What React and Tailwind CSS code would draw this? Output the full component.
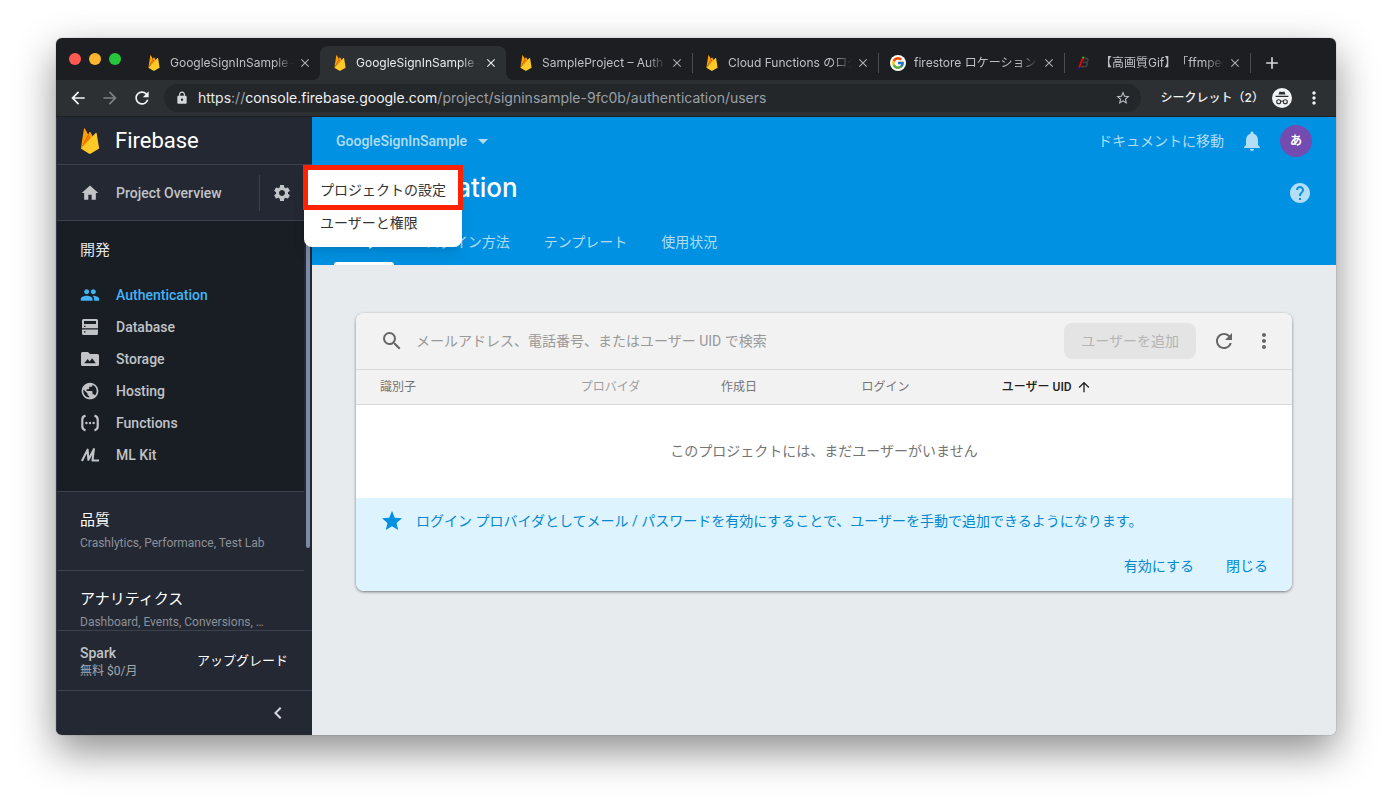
import React from "react";
import {
  MdAdd,
  MdArrowBack,
  MdArrowDropDown,
  MdArrowForward,
  MdArrowUpward,
  MdChevronLeft,
  MdClose,
  MdHelp,
  MdHome,
  MdLock,
  MdMoreVert,
  MdNotifications,
  MdPeople,
  MdPublic,
  MdRefresh,
  MdSearch,
  MdSettings,
  MdStar,
  MdStarBorder,
} from "react-icons/md";
import { FcGoogle } from "react-icons/fc";

function FirebaseLogo({ className }) {
  return (
    <svg viewBox="5 1.6 22 29" className={className} aria-hidden="true">
      <path fill="#ffa000" d="M5.8 24.6l.17-.24L13.99 9.15l.02-.16-3.54-6.64a.66.66 0 0 0-1.23.2z" />
      <path fill="#ffa000" d="M16.58 14.01l2.63-2.7-2.63-5.02a.68.68 0 0 0-1.2 0l-1.4 2.68v.23z" />
      <path fill="#f57c00" d="M5.8 24.6l.08-.08.28-.11 10.25-10.22.13-.36-2.53-4.82z" />
      <path fill="#ffca28" d="M16.53 30.22l9.67-5.64L23.43 7.56a.69.69 0 0 0-1.17-.38L5.8 24.6l9.23 5.62a1.51 1.51 0 0 0 1.5 0" />
    </svg>
  );
}

function BlogLogo({ className }) {
  return (
    <svg viewBox="0 0 16 16" className={className} aria-hidden="true">
      <path
        d="M7 3.400h3.400c2.400 0 2.200 3.600-.8 4h-2.600 2.600c2.800.3 2 4.300-1.200 4.300H4.800"
        fill="none"
        stroke="#3c4043"
        strokeWidth="1.700"
      />
      <path d="M6.800 3.200L3.200 12.300" stroke="#f00505" strokeWidth="1.800" />
      <circle cx="7.200" cy="2.400" r="1" fill="#12d812" />
      <circle cx="2.600" cy="13.300" r=".8" fill="#1414e6" />
    </svg>
  );
}

function IncognitoIcon({ className }) {
  return (
    <svg viewBox="0 0 20 20" className={className} aria-hidden="true">
      <circle cx="10" cy="10" r="10" fill="#f1f3f4" />
      <path fill="#2b2e31" d="M7.6 3.400l2.400.6 2.400-.6 1.100 3.200h-7zM3.600 7.800h12.800v1.300H3.600z" />
      <g fill="none" stroke="#2b2e31" strokeWidth="1.100">
        <circle cx="6.700" cy="13.700" r="2" />
        <circle cx="13.300" cy="13.700" r="2" />
        <path d="M8.700 13.400q1.300-.8 2.600 0" />
      </g>
    </svg>
  );
}

function DatabaseIcon({ className }) {
  return (
    <svg viewBox="0 0 18 18" className={className} fill="currentColor" aria-hidden="true">
      <path
        fillRule="evenodd"
        d="M2.500 1h13A1.500 1.500 0 0 1 17 2.500V10.300H1V2.500A1.500 1.500 0 0 1 2.500 1zM3 3v3h12V3zM3 7.700v1.300h1.500V7.700z"
      />
      <path
        fillRule="evenodd"
        d="M1 11.500h16v4a1.500 1.500 0 0 1-1.500 1.500h-13A1.500 1.500 0 0 1 1 15.500zM3 13.200v1.300h1.500v-1.300z"
      />
    </svg>
  );
}

function StorageIcon({ className }) {
  return (
    <svg viewBox="0 0 18 18" className={className} fill="currentColor" aria-hidden="true">
      <path
        fillRule="evenodd"
        d="M1.500 2H7l2 2h7.500A1.500 1.500 0 0 1 18 5.500v9a1.500 1.500 0 0 1-1.500 1.500h-15A1.500 1.500 0 0 1 0 14.500v-11A1.500 1.500 0 0 1 1.500 2zM3.200 13.200h11.600l-3.700-5-2.500 3.200-1.900-2.300z"
      />
    </svg>
  );
}

function FunctionsIcon({ className }) {
  return (
    <svg viewBox="0 0 18 18" className={className} aria-hidden="true">
      <g fill="none" stroke="currentColor" strokeWidth="2.200">
        <path d="M4.500 1.600Q1.300 2.600 1.300 5.400v7.200Q1.300 15.400 4.500 16.400" />
        <path d="M13.500 1.600q3.200 1 3.200 3.800v7.200q0 2.800-3.200 3.800" />
      </g>
      <g fill="currentColor">
        <circle cx="5.400" cy="9" r="1.200" />
        <circle cx="9" cy="9" r="1.200" />
        <circle cx="12.600" cy="9" r="1.200" />
      </g>
    </svg>
  );
}

function MlIcon({ className }) {
  return (
    <svg viewBox="0 0 18 18" className={className} aria-hidden="true">
      <path
        d="M.9 15L6.600 3.600l.8 10.200L12.900 3.200 11.500 14.500H18"
        fill="none"
        stroke="currentColor"
        strokeWidth="2.100"
        strokeLinejoin="round"
      />
    </svg>
  );
}

const browserTabs = [
  { title: "GoogleSignInSample –", icon: FirebaseLogo },
  { title: "GoogleSignInSample –", icon: FirebaseLogo, active: true },
  { title: "SampleProject – Auth", icon: FirebaseLogo },
  { title: "Cloud Functions のログ", icon: FirebaseLogo, divider: true },
  { title: "firestore ロケーション", icon: FcGoogle, round: true, divider: true },
  { title: "【高画質Gif】「ffmpeg", icon: BlogLogo, divider: true },
];

function BrowserTab({ tab }) {
  const Icon = tab.icon;
  return (
    <div
      className={
        "relative flex h-[34px] w-[186px] min-w-0 items-center pr-2 pl-3 " +
        (tab.active
          ? "rounded-t-lg bg-[#2c3033] text-[#e8eaed] before:absolute before:bottom-0 before:-left-2 before:size-2 before:bg-[radial-gradient(circle_at_0_0,#1d1e21_8px,#2c3033_8px)] after:absolute after:-right-2 after:bottom-0 after:size-2 after:bg-[radial-gradient(circle_at_100%_0,#1d1e21_8px,#2c3033_8px)]"
          : "text-[#bdc1c6]")
      }
    >
      {tab.divider && <span className="-ml-3 mr-[11px] h-5 w-px shrink-0 bg-[#4a4d51]" />}
      <span
        className={"flex size-4 shrink-0 items-center justify-center " + (tab.round ? "rounded-full bg-white" : "")}
      >
        <Icon className={tab.round ? "size-3.5" : "size-4"} />
      </span>
      <span className="ml-2 min-w-0 flex-1 overflow-hidden text-xs whitespace-nowrap [mask-image:linear-gradient(to_right,#000_84%,transparent_100%)] [text-spacing-trim:space-all]">
        {tab.title}
      </span>
      <button type="button" aria-label="タブを閉じる" className={"ml-1 shrink-0 " + (tab.active ? "text-[#e8eaed]" : "text-[#a7aaae]")}>
        <MdClose className="size-3.5" />
      </button>
    </div>
  );
}

function BrowserChrome() {
  return (
    <header className="font-['Inter','Noto_Sans_CJK_JP',sans-serif]">
      <div className="flex h-[42px] items-end bg-[#1d1e21]">
        <div className="flex h-full shrink-0 items-center gap-2 px-[13px]">
          <button type="button" aria-label="閉じる" className="size-3 rounded-full bg-[#ff5a52]" />
          <button type="button" aria-label="最小化" className="size-3 rounded-full bg-[#ffb52e]" />
          <button type="button" aria-label="最大化" className="size-3 rounded-full bg-[#26c73c]" />
        </div>
        <div className="flex min-w-0">
          {browserTabs.map((tab, i) => (
            <BrowserTab key={i} tab={tab} />
          ))}
        </div>
        <div className="flex h-[34px] shrink-0 items-center">
          <span className="h-5 w-px bg-[#4a4d51]" />
          <button type="button" aria-label="新しいタブ" className="ml-[11px] text-[#d5d7da]">
            <MdAdd className="size-5" />
          </button>
        </div>
      </div>
      <div className="flex h-[37px] items-center border-b border-[#1d1e21] bg-[#2c3033] pr-3 text-[#f1f3f4]">
        <div className="flex shrink-0 gap-3 px-3">
          <button type="button" aria-label="戻る">
            <MdArrowBack className="size-5" />
          </button>
          <button type="button" aria-label="進む" className="text-[#7d8083]">
            <MdArrowForward className="size-5" />
          </button>
          <button type="button" aria-label="再読み込み">
            <MdRefresh className="size-5" />
          </button>
        </div>
        <div className="flex h-7 min-w-0 flex-1 items-center rounded-full bg-[#23272a] px-2.5">
          <MdLock className="size-4 shrink-0 p-px text-[#d5d7da]" />
          <div className="ml-2 min-w-0 flex-1 overflow-hidden text-sm whitespace-nowrap text-[#9aa0a6]">
            <span className="text-[#e8eaed]">https</span>://
            <span className="text-[#f1f3f4]">console.firebase.google.com</span>
            /project/signinsample-9fc0b/authentication/users
          </div>
          <button type="button" aria-label="ブックマークに追加" className="text-[#bdc1c6]">
            <MdStarBorder className="size-4" />
          </button>
        </div>
        <span className="ml-5 shrink-0 text-xs font-medium">シークレット（2）</span>
        <IncognitoIcon className="ml-2 size-5 shrink-0" />
        <button type="button" aria-label="メニュー" className="ml-3 shrink-0">
          <MdMoreVert className="size-5" />
        </button>
      </div>
    </header>
  );
}

const developItems = [
  { label: "Authentication", icon: MdPeople, active: true },
  { label: "Database", icon: DatabaseIcon },
  { label: "Storage", icon: StorageIcon },
  { label: "Hosting", icon: MdPublic },
  { label: "Functions", icon: FunctionsIcon },
  { label: "ML Kit", icon: MlIcon },
];

const sections = [
  { title: "品質", detail: "Crashlytics, Performance, Test Lab" },
  { title: "アナリティクス", detail: "Dashboard, Events, Conversions, …" },
];

function SettingsMenu() {
  return (
    <div className="absolute top-0 left-[247px] z-20 w-[158px] rounded-lg bg-white py-2 text-sm text-[#333333] shadow-lg">
      <button type="button" className="block h-[33px] w-full pl-4 text-left">
        プロジェクトの設定
      </button>
      <button type="button" className="block h-[33px] w-full pl-4 text-left">
        ユーザーと権限
      </button>
      <div className="pointer-events-none absolute top-0 -left-px h-[45px] w-40 border-5 border-[#ff2200]" />
    </div>
  );
}

function Sidebar() {
  return (
    <aside className="flex w-64 shrink-0 flex-col border-l border-[#343a46] bg-[#232833] text-white">
      <div className="flex h-12 shrink-0 items-center border-b border-[#3b414d] pl-[23px]">
        <FirebaseLogo className="h-[26px] w-5" />
        <span className="ml-[15px] text-[22px]">Firebase</span>
      </div>
      <div className="relative flex h-14 shrink-0 items-center border-b border-[#3b414d] pl-[23px] text-[#c1c3c7]">
        <a href="#overview" className="flex flex-1 items-center gap-4 text-sm font-medium">
          <MdHome className="size-5" />
          Project Overview
        </a>
        <span className="h-9 w-px bg-[#3b414d]" />
        <button type="button" aria-label="設定" className="mr-5 ml-3">
          <MdSettings className="size-5" />
        </button>
        <SettingsMenu />
      </div>
      <div className="flex min-h-0 flex-1">
        <nav className="min-w-0 flex-1 overflow-y-auto [scrollbar-width:none]">
          <div className="bg-[#191e25] px-[23px] pt-[17px] pb-5">
            <h2 className="mb-[17px] h-6 text-[15px] leading-6 text-[#e3e4e6]">開発</h2>
            <ul>
              {developItems.map(({ label, icon: Icon, active }) => (
                <li key={label}>
                  <a
                    href={"#" + label}
                    className={
                      "flex h-8 items-center gap-4 text-sm font-medium " + (active ? "text-[#42b4f5]" : "text-[#c1c3c7]")
                    }
                  >
                    <span className="flex size-5 items-center justify-center">
                      <Icon className={Icon === MdPeople || Icon === MdPublic ? "size-5" : "size-[18px]"} />
                    </span>
                    {label}
                  </a>
                </li>
              ))}
            </ul>
          </div>
          {sections.map((s) => (
            <section key={s.title} className="h-[79px] border-t border-[#3b414d] px-[23px] pt-4">
              <h2 className="h-6 text-[15px] leading-6">{s.title}</h2>
              <p className="truncate text-xs leading-[22px] text-[#8d9097]">{s.detail}</p>
            </section>
          ))}
        </nav>
        <div className="w-2 px-px pl-0.5">
          <div className="h-4/5 w-1 rounded-b bg-[#7b8aa5]" />
        </div>
      </div>
      <div className="flex h-[60px] shrink-0 items-center justify-between border-t border-[#3b414d] pr-6 pl-[23px]">
        <div>
          <p className="text-sm leading-5 font-medium text-[#c1c3c7]">Spark</p>
          <p className="text-xs leading-4 text-[#a7a9ad]">無料 $0/月</p>
        </div>
        <button type="button" className="text-[13px]">
          アップグレード
        </button>
      </div>
      <div className="flex h-[45px] shrink-0 items-center justify-end border-t border-[#3b414d] pr-[22px]">
        <button type="button" aria-label="サイドバーを閉じる" className="text-[#d5d7da]">
          <MdChevronLeft className="size-6" />
        </button>
      </div>
    </aside>
  );
}

const pageTabs = ["ユーザー", "ログイン方法", "テンプレート", "使用状況"];

function PageHeader() {
  return (
    <div className="flex shrink-0 flex-col bg-[#0091e2] px-6 text-white">
      <div className="flex h-12 items-center text-sm text-white/70">
        <button type="button" className="flex items-center gap-1 font-medium">
          GoogleSignInSample
          <MdArrowDropDown className="size-6" />
        </button>
        <a href="#docs" className="ml-auto">
          ドキュメントに移動
        </a>
        <button type="button" aria-label="通知" className="ml-4">
          <MdNotifications className="size-6" />
        </button>
        <button type="button" className="ml-4 size-8 rounded-full bg-[#744bb0] text-xs font-bold text-white">
          あ
        </button>
      </div>
      <div className="flex h-14 items-center justify-between">
        <h1 className="self-start font-['Inter','Noto_Sans_CJK_JP',sans-serif] text-[26px] leading-[46px] font-medium">
          Authentication
        </h1>
        <button type="button" aria-label="ヘルプ" className="text-white/70">
          <MdHelp className="size-6" />
        </button>
      </div>
      <nav className="flex h-11 gap-[34px] text-sm text-white/70">
        {pageTabs.map((t, i) => (
          <a key={t} href={"#tab-" + i} className={"relative flex items-center pb-0.5 " + (i === 0 ? "text-white" : "")}>
            {t}
            {i === 0 && <span className="absolute -inset-x-0.5 bottom-0 h-[3px] rounded-t-sm bg-white" />}
          </a>
        ))}
      </nav>
    </div>
  );
}

function UsersCard() {
  return (
    <section className="m-11 mt-12 overflow-hidden rounded-lg bg-white shadow-[0_1px_3px_rgba(0,0,0,0.5)]">
      <div className="flex h-14 items-center bg-[#f2f2f2] pr-2 pl-6">
        <label htmlFor="user-search" aria-label="ユーザーを検索" className="text-[#666666]">
          <MdSearch className="size-6" />
        </label>
        <input
          id="user-search"
          type="text"
          placeholder="メールアドレス、電話番号、またはユーザー UID で検索"
          className="ml-3 min-w-0 flex-1 bg-transparent text-sm outline-none placeholder:text-[#999999]"
        />
        <button type="button" disabled className="h-9 rounded-lg bg-[#e4e4e4] px-[17px] text-sm text-[#b4b4b4]">
          ユーザーを追加
        </button>
        <button type="button" aria-label="更新" className="ml-2 flex size-10 items-center justify-center text-[#666666]">
          <MdRefresh className="size-6" />
        </button>
        <button type="button" aria-label="その他" className="flex size-10 items-center justify-center text-[#666666]">
          <MdMoreVert className="size-6" />
        </button>
      </div>
      <table className="w-full table-fixed text-left">
        <thead className="border-y border-[#d8d8d8] bg-[#f2f2f2] text-xs text-[#757575]">
          <tr className="h-[35px]">
            <th className="w-[24%] pl-6 font-normal">識別子</th>
            <th className="w-[15%] font-normal text-[#9e9e9e]">プロバイダ</th>
            <th className="w-[15%] font-normal">作成日</th>
            <th className="w-[15%] font-normal">ログイン</th>
            <th className="font-medium text-[#212121]">
              <button type="button" className="flex items-center gap-1">
                ユーザー UID
                <MdArrowUpward className="size-4" />
              </button>
            </th>
          </tr>
        </thead>
        <tbody>
          <tr className="h-[93px]">
            <td colSpan={5} className="text-center text-sm text-[#757575]">
              このプロジェクトには、まだユーザーがいません
            </td>
          </tr>
        </tbody>
      </table>
      <div className="bg-[#ddf3fe] pt-[11px] pb-[7px] text-sm text-[#0288d1]">
        <div className="flex min-h-6 items-center gap-3 px-6">
          <MdStar className="size-6 shrink-0 text-[#0091e2]" />
          <p>ログイン プロバイダとしてメール / パスワードを有効にすることで、ユーザーを手動で追加できるようになります。</p>
        </div>
        <div className="mt-[15px] flex justify-end pr-2">
          <button type="button" className="h-9 px-4">
            有効にする
          </button>
          <button type="button" className="h-9 px-4">
            閉じる
          </button>
        </div>
      </div>
    </section>
  );
}

export default function App() {
  return (
    <div className="flex h-screen flex-col bg-white px-14 pt-[38px] pb-[74px] font-['Roboto','Noto_Sans_CJK_JP',sans-serif]">
      <div className="flex min-h-0 flex-1 flex-col overflow-hidden rounded-md shadow-[0_0_1px_rgba(0,0,0,0.6),0_16px_40px_rgba(0,0,0,0.45)]">
        <BrowserChrome />
        <div className="flex min-h-0 flex-1">
          <Sidebar />
          <main className="flex min-w-0 flex-1 flex-col bg-[#e7ebee]">
            <PageHeader />
            <UsersCard />
          </main>
        </div>
      </div>
    </div>
  );
}
